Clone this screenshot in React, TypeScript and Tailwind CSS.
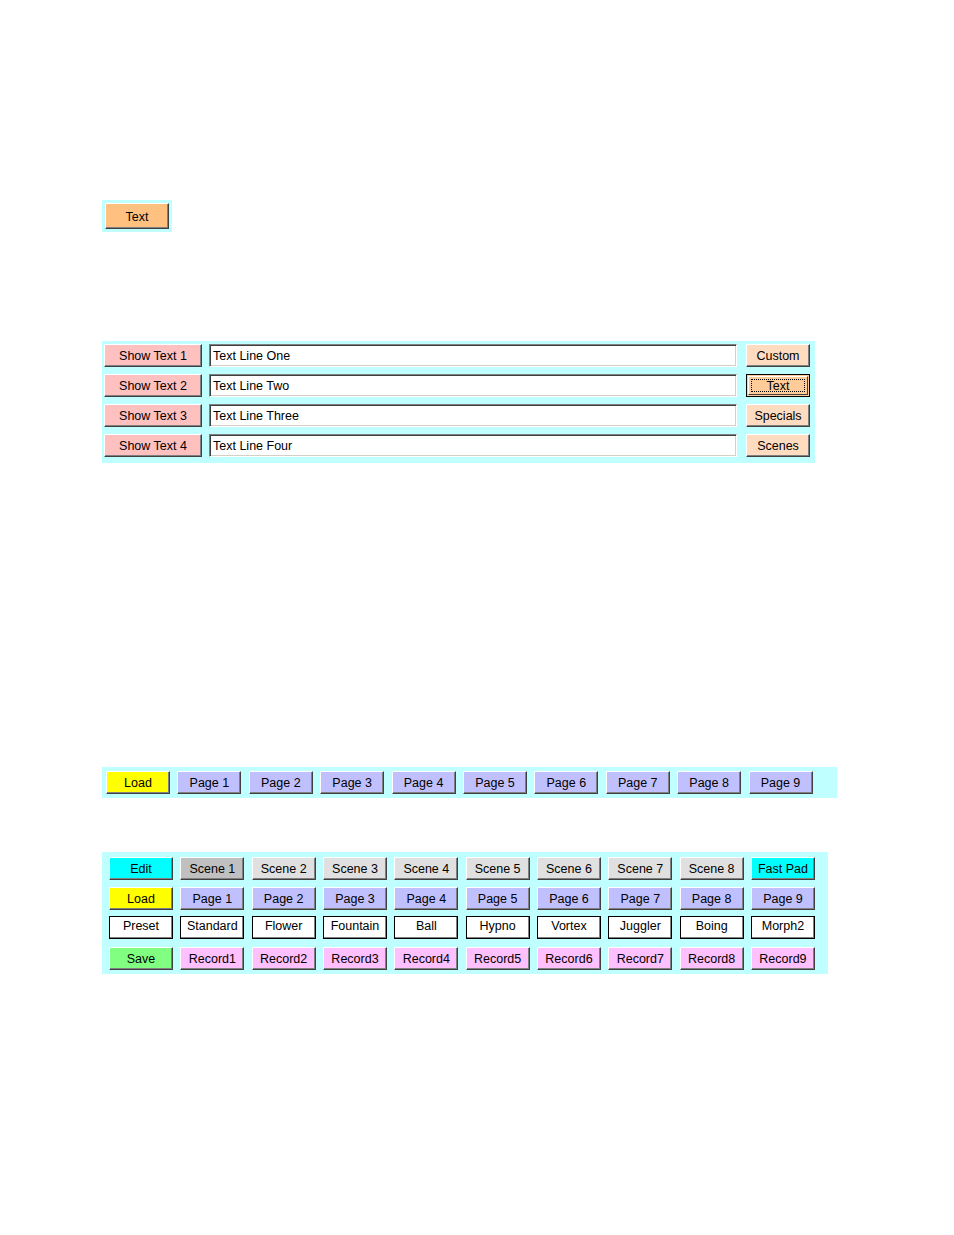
import React from "react";

type Tone =
  | "orange"
  | "pink"
  | "peach"
  | "peachOn"
  | "lilac"
  | "yellow"
  | "aqua"
  | "grayDark"
  | "gray"
  | "green"
  | "magenta";

const faces: Record<Tone, string> = {
  orange: "bg-[#ffc080]",
  pink: "bg-[#ffc0c0]",
  peach: "bg-[#ffdcc0]",
  peachOn: "bg-[#ffcc99]",
  lilac: "bg-[#c0c0ff]",
  yellow: "bg-[#ffff00]",
  aqua: "bg-[#00ffff]",
  grayDark: "bg-[#c0c0c0]",
  gray: "bg-[#e0e0e0]",
  green: "bg-[#80ff80]",
  magenta: "bg-[#ffc0ff]",
};

function Btn({
  tone,
  label,
  className = "",
  focused = false,
}: {
  tone: Tone;
  label: string;
  className?: string;
  focused?: boolean;
}) {
  if (focused) {
    return (
      <div
        className={`flex items-center justify-center border border-black p-[1px] ${faces[tone]} ${className}`}
      >
        <div className="flex h-full w-full items-center justify-center border border-t-white border-l-white border-b-[#404040] border-r-[#404040] p-[2px]">
          <div className="flex h-full w-full items-center justify-center border border-dotted border-black pt-[2px] leading-none">
            {label}
          </div>
        </div>
      </div>
    );
  }
  return (
    <div
      className={`flex items-center justify-center border border-t-white border-l-white border-b-[#404040] border-r-[#404040] pt-[2px] shadow-[inset_-1px_-1px_0_#808080] leading-none ${faces[tone]} ${className}`}
    >
      {label}
    </div>
  );
}

function Field({ value }: { value: string }) {
  return (
    <div className="flex h-[23px] w-[528px] items-center border border-t-[#808080] border-l-[#808080] border-b-white border-r-white bg-white pl-[3px] pt-[1px] shadow-[inset_1px_1px_0_#404040,inset_-1px_-1px_0_#d4d0c8] leading-none">
      {value}
    </div>
  );
}

function Preset({ label }: { label: string }) {
  return (
    <div className="flex h-[23px] w-[64px] items-start justify-center border border-black bg-white pt-[3px] shadow-[inset_-1px_-1px_0_#808080] leading-none">
      {label}
    </div>
  );
}

const textRows = [
  ["Show Text 1", "Text Line One", "Custom"],
  ["Show Text 2", "Text Line Two", "Text"],
  ["Show Text 3", "Text Line Three", "Specials"],
  ["Show Text 4", "Text Line Four", "Scenes"],
];

const nums = [1, 2, 3, 4, 5, 6, 7, 8, 9];

export default function App() {
  return (
    <div className="min-h-[1235px] bg-white pl-[102px] pt-[200px] font-['Liberation_Sans',Arial,sans-serif] text-[12.5px] text-black">
      {/* single text button */}
      <div className="w-[70px] bg-[#c0ffff] p-[3px]">
        <Btn tone="orange" label="Text" className="h-[26px] w-[64px]" />
      </div>

      {/* text lines */}
      <div className="mt-[109px] flex w-[713px] flex-col gap-[7px] bg-[#c0ffff] pb-[6px] pl-[2px] pt-[3px]">
        {textRows.map(([btn, line, side], i) => (
          <div key={btn} className="flex items-center">
            <Btn tone="pink" label={btn} className="h-[23px] w-[98px]" />
            <div className="ml-[7px]">
              <Field value={line} />
            </div>
            <Btn
              tone={i === 1 ? "peachOn" : "peach"}
              focused={i === 1}
              label={side}
              className="ml-[9px] h-[23px] w-[64px]"
            />
          </div>
        ))}
      </div>

      {/* page strip */}
      <div className="mt-[304px] flex w-[735px] gap-[7.4px] bg-[#c0ffff] pb-[4px] pl-[4px] pt-[4px]">
        <Btn tone="yellow" label="Load" className="h-[23px] w-[64px]" />
        {nums.map((n) => (
          <Btn key={n} tone="lilac" label={`Page ${n}`} className="h-[23px] w-[64px]" />
        ))}
      </div>

      {/* scene grid */}
      <div className="mt-[54px] flex w-[726px] flex-col bg-[#c0ffff] pb-[4px] pl-[7px] pt-[5px]">
        <div className="flex gap-[7.33px]">
          <Btn tone="aqua" label="Edit" className="h-[23px] w-[64px]" />
          {[1, 2, 3, 4, 5, 6, 7, 8].map((n) => (
            <Btn
              key={n}
              tone={n === 1 ? "grayDark" : "gray"}
              label={`Scene ${n}`}
              className="h-[23px] w-[64px]"
            />
          ))}
          <Btn tone="aqua" label="Fast Pad" className="h-[23px] w-[64px]" />
        </div>
        <div className="mt-[7px] flex gap-[7.33px]">
          <Btn tone="yellow" label="Load" className="h-[23px] w-[64px]" />
          {nums.map((n) => (
            <Btn key={n} tone="lilac" label={`Page ${n}`} className="h-[23px] w-[64px]" />
          ))}
        </div>
        <div className="mt-[6px] flex gap-[7.33px]">
          {[
            "Preset",
            "Standard",
            "Flower",
            "Fountain",
            "Ball",
            "Hypno",
            "Vortex",
            "Juggler",
            "Boing",
            "Morph2",
          ].map((p) => (
            <Preset key={p} label={p} />
          ))}
        </div>
        <div className="mt-[8px] flex gap-[7.33px]">
          <Btn tone="green" label="Save" className="h-[23px] w-[64px]" />
          {nums.map((n) => (
            <Btn key={n} tone="magenta" label={`Record${n}`} className="h-[23px] w-[64px]" />
          ))}
        </div>
      </div>
    </div>
  );
}
